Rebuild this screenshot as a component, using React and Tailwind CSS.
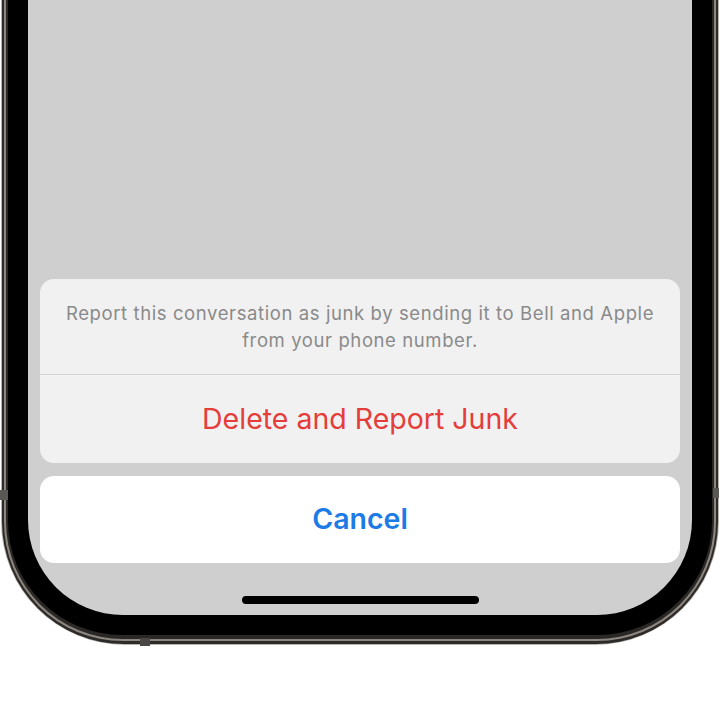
import React from 'react';

const font = { fontFamily: 'Inter, "Noto Sans", sans-serif' };

const ActionSheet = () => {
    return (
        <div className="flex flex-col px-[12px]">
            <div className="bg-[#f1f1f1] rounded-[14px] overflow-hidden">
                <div className="h-[96px] flex items-center justify-center px-[14px] border-b border-[#d6d6d6]">
                    <p className="text-center text-[18.5px] leading-[27px] text-[#8a8a8a] tracking-[0.6px]">
                        Report this conversation as junk by sending it to Bell and Apple from your phone number.
                    </p>
                </div>
                <button className="w-full h-[88px] flex items-center justify-center text-[28.5px] text-[#e53d3a]">
                    Delete and Report Junk
                </button>
            </div>
            <button className="mt-[13px] w-full h-[87px] bg-white rounded-[14px] flex items-center justify-center text-[28.5px] font-semibold text-[#1c7be6]">
                Cancel
            </button>
            <div className="mt-[33px] mb-[11px] mx-auto w-[237px] h-[8px] rounded-full bg-black"></div>
        </div>
    );
};

const App = () => {
    return (
        <div className="w-[720px] h-[720px] bg-white overflow-hidden relative" style={font}>
            <div className="ml-[1px] w-[718px] px-[1px] pb-[1px] bg-[#b9b4ad] rounded-b-[124px]">
                <div className="px-[2px] pb-[3px] bg-[#2d2b29] rounded-b-[122px]">
                    <div className="px-[2px] pb-[2px] bg-[#8d8780] rounded-b-[119px]">
                        <div className="px-[2px] pb-[4px] bg-[#2a2826] rounded-b-[117px]">
                            <div className="px-[20px] pb-[20px] bg-black rounded-b-[114px]">
                                <div className="h-[615px] bg-[#cfcfcf] rounded-b-[95px] flex flex-col justify-end overflow-hidden">
                                    <ActionSheet />
                                </div>
                            </div>
                        </div>
                    </div>
                </div>
            </div>
            <div className="absolute left-0 top-[490px] w-[8px] h-[10px] bg-[#5a5855]"></div>
            <div className="absolute right-[1px] top-[488px] w-[6px] h-[10px] bg-[#5a5855]"></div>
            <div className="absolute left-[140px] top-[638px] w-[10px] h-[8px] bg-[#4a4846]"></div>
        </div>
    );
};

export default App;
